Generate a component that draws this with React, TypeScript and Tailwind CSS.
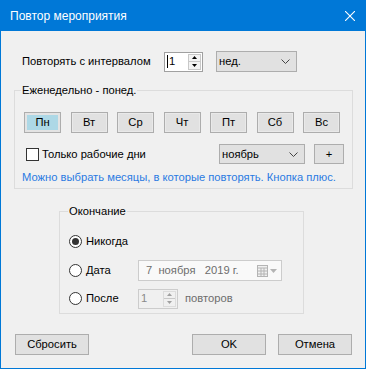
import React from 'react';

const font = "font-['Liberation_Sans',Arial,sans-serif]";

function Chevron() {
  return (
    <svg width="9" height="5" viewBox="0 0 9 5" fill="none" stroke="#444" strokeWidth="1">
      <polyline points="0.5,0.5 4.5,4.5 8.5,0.5" />
    </svg>
  );
}

function Spin({ disabled }: { disabled?: boolean }) {
  const arrow = disabled ? '#a0a0a0' : '#000';
  return (
    <div
      className={`flex h-[20px] border ${
        disabled ? 'w-[40px] border-[#cccccc] bg-[#f0f0f0] text-[#8a8a8a]' : 'w-[39px] border-[#a0a0a0] bg-white text-black'
      }`}
    >
      <div className="flex flex-1 items-center pl-[2px] leading-none">
        {!disabled && <span className="mr-[1px] h-[13px] w-px bg-black" />}
        1
      </div>
      <div className={`my-[1px] mr-[1px] flex w-[13px] flex-col border ${disabled ? 'border-[#dcdcdc]' : 'border-[#c8c8c8] bg-[#f3f3f3]'}`}>
        <div className="flex flex-1 items-center justify-center border-b border-[#c8c8c8]">
          <svg width="5" height="3" viewBox="0 0 5 3"><polygon points="2.5,0 5,3 0,3" fill={arrow} /></svg>
        </div>
        <div className="flex flex-1 items-center justify-center">
          <svg width="5" height="3" viewBox="0 0 5 3"><polygon points="0,0 5,0 2.5,3" fill={arrow} /></svg>
        </div>
      </div>
    </div>
  );
}

function Radio({ checked, label }: { checked?: boolean; label: string }) {
  return (
    <div className="flex w-[69px] items-center">
      <span className="flex h-[13px] w-[13px] items-center justify-center rounded-full border border-[#333] bg-white">
        {checked && <span className="h-[7px] w-[7px] rounded-full bg-[#333]" />}
      </span>
      <span className="ml-[4px]">{label}</span>
    </div>
  );
}

const days = ['Пн', 'Вт', 'Ср', 'Чт', 'Пт', 'Сб', 'Вс'];

export default function App() {
  return (
    <div className={`${font} flex h-[369px] w-[366px] flex-col border border-[#0078d7] bg-[#f0f0f0] text-[11.2px] text-black`}>
      {/* заголовок окна */}
      <div className="flex h-[30px] shrink-0 items-center justify-between bg-[#0078d7] pl-[9px] pr-[10px] text-[12px] text-white">
        <span>Повтор мероприятия</span>
        <svg width="10" height="10" viewBox="0 0 10 10" stroke="white" strokeWidth="1.1">
          <line x1="0" y1="0" x2="10" y2="10" />
          <line x1="10" y1="0" x2="0" y2="10" />
        </svg>
      </div>

      <div className="mt-[20px] flex h-[21px] items-center pl-[21px]">
        <span className="w-[142px]">Повторять с интервалом</span>
        <Spin />
        <div className="ml-[13px] flex h-[21px] w-[81px] items-center justify-between border border-[#adadad] bg-[#e1e1e1] pl-[2px] pr-[6px]">
          <span>нед.</span>
          <Chevron />
        </div>
      </div>

      <fieldset className="ml-[13px] mt-[11px] w-[339px] border border-[#dcdcdc] px-0 pb-[3px] pt-[14px]">
        <legend className="ml-[6px] px-px leading-[15px]">Еженедельно - понед.</legend>
        <div className="flex w-[325px] justify-between pl-[9px]">
          {days.map((d, i) => (
            <div
              key={d}
              className={`flex h-[21px] w-[37px] items-center justify-center border border-[#adadad] ${
                i === 0 ? 'bg-[#add8e6] shadow-[inset_0_0_0_2px_#e3e3e3]' : 'bg-[#e1e1e1] shadow-[inset_0_0_0_1px_#e9e9e9]'
              }`}
            >
              {d}
            </div>
          ))}
        </div>

        <div className="mt-[11px] flex h-[20px] items-center pl-[11px]">
          <span className="h-[13px] w-[13px] border border-[#333] bg-white" />
          <span className="ml-[3px] w-[177px]">Только рабочие дни</span>
          <div className="flex h-[20px] w-[86px] items-center justify-between border border-[#adadad] bg-[#e1e1e1] pl-[2px] pr-[6px]">
            <span>ноябрь</span>
            <Chevron />
          </div>
          <div className="ml-[9px] flex h-[20px] w-[30px] items-center justify-center border border-[#adadad] bg-[#e1e1e1]">
            +
          </div>
        </div>

        <p className="mt-[6px] whitespace-nowrap pl-[7px] leading-[15px] text-[#2a7ae2]">
          Можно выбрать месяцы, в которые повторять. Кнопка плюс.
        </p>
      </fieldset>

      <fieldset className="ml-[58px] mt-[15px] w-[245px] border border-[#dcdcdc] px-0 pb-[4px] pl-[9px] pt-[12px]">
        <legend className="ml-[-1px] px-px leading-[15px]">Окончание</legend>
        <div className="flex h-[21px] items-center">
          <Radio checked label="Никогда" />
        </div>
        <div className="mt-[8px] flex h-[21px] items-center">
          <Radio label="Дата" />
          <div className="flex h-[21px] w-[144px] items-center justify-between border border-[#cccccc] bg-[#f9f9f9] pl-[7px] pr-[4px] text-[#6d6d6d]">
            <span className="whitespace-pre">7  ноября   2019 г.</span>
            <div className="flex items-center gap-[2px]">
              <svg width="11" height="12" viewBox="0 0 11 12" fill="none" stroke="#b4b4b4" strokeWidth="1">
                <rect x="0.5" y="0.5" width="10" height="11" fill="#f0f0f0" />
                <line x1="0.5" y1="3" x2="10.5" y2="3" />
                <line x1="0.5" y1="6" x2="10.5" y2="6" />
                <line x1="0.5" y1="9" x2="10.5" y2="9" />
                <line x1="4" y1="3" x2="4" y2="11.5" />
                <line x1="7" y1="3" x2="7" y2="11.5" />
              </svg>
              <svg width="7" height="4" viewBox="0 0 7 4"><polygon points="0,0 7,0 3.5,4" fill="#b4b4b4" /></svg>
            </div>
          </div>
        </div>
        <div className="mt-[7px] flex h-[21px] items-center">
          <Radio label="После" />
          <Spin disabled />
          <span className="ml-[7px] text-[#6d6d6d]">повторов</span>
        </div>
      </fieldset>

      <div className="mt-[20px] flex h-[21px] pl-[14px]">
        <div className="flex w-[74px] items-center justify-center border border-[#adadad] bg-[#e1e1e1]">Сбросить</div>
        <div className="ml-[103px] flex w-[74px] items-center justify-center border border-[#adadad] bg-[#e1e1e1]">OK</div>
        <div className="ml-[12px] flex w-[74px] items-center justify-center border border-[#adadad] bg-[#e1e1e1]">Отмена</div>
      </div>
    </div>
  );
}
